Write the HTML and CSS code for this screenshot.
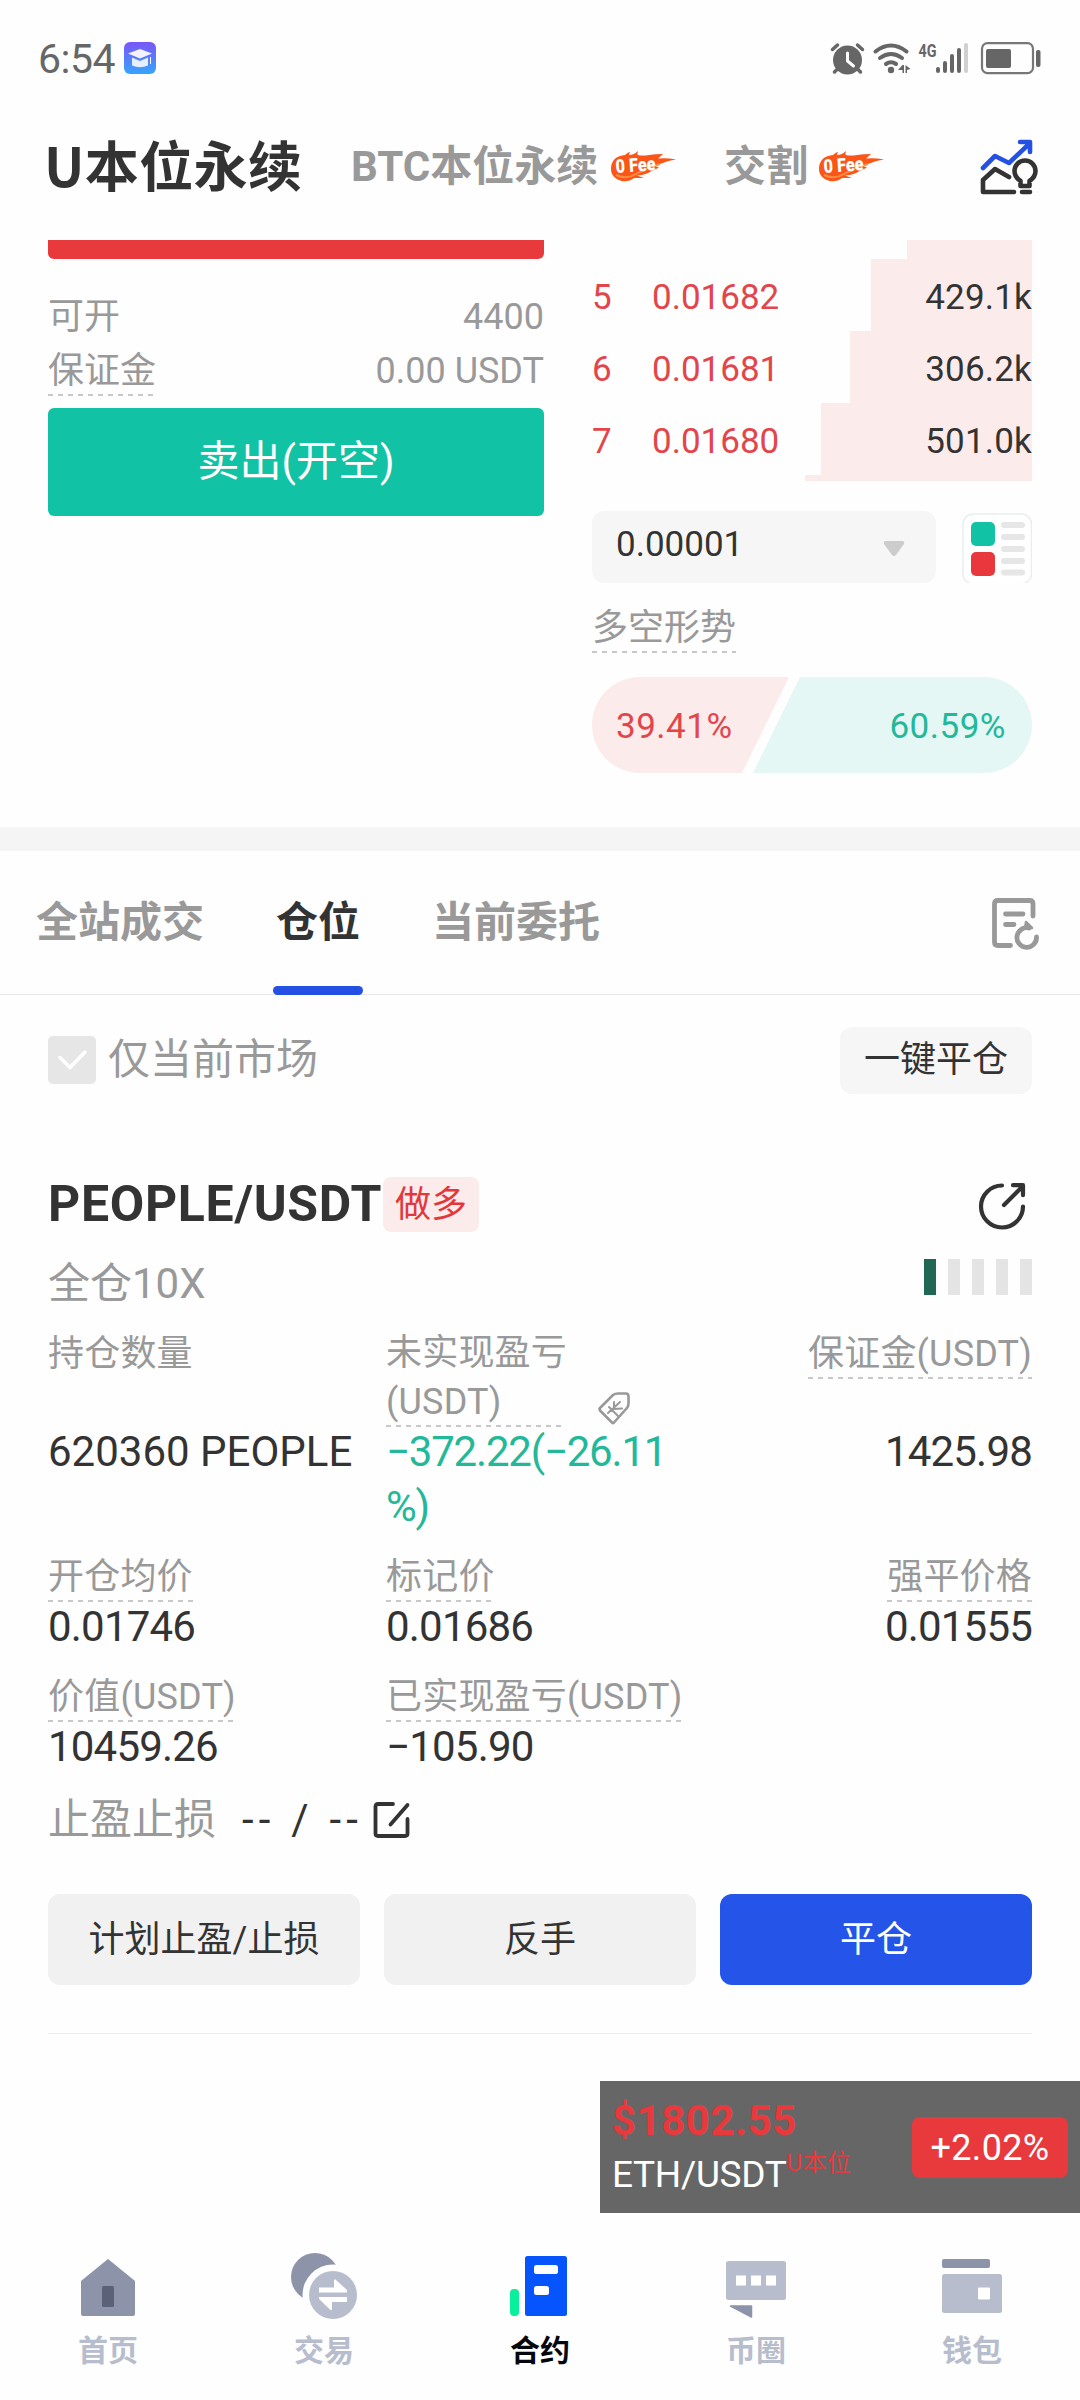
FILE: index.html
```html
<!DOCTYPE html>
<html lang="zh-CN">
<head>
<meta charset="utf-8">
<title>U本位永续</title>
<link rel="stylesheet" href="styles.css">
</head>
<body>
<div class="screen">
  <div class="status">
    <span class="clock">6:54</span>
    <svg class="app-badge" width="32" height="32" viewBox="0 0 32 32">
      <defs><linearGradient id="bg" x1="0" y1="0" x2="0" y2="1"><stop offset="0" stop-color="#7a55f7"/><stop offset="1" stop-color="#35a5fe"/></linearGradient></defs>
      <rect width="32" height="32" rx="6" fill="url(#bg)"/>
      <path d="M4 11.500 16 7l12 4.500L16 16.500z" fill="#f4f2ff"/>
      <path d="M8 15.500l8 3.500 8-3.500v8q-8 3.500-16 0z" fill="#e6efff"/>
      <path d="M26.500 15v7" stroke="#fff" stroke-width="1"/>
    </svg>
    <svg class="status-icons" width="212" height="44" viewBox="830 36 212 44" fill="#666">
      <circle cx="847.500" cy="60" r="14.500"/>
      <path d="M832.500 49.500l5-4.500M857.500 45l5 4.500M837 69.500l-2.500 2.500M858 69.500l2.500 2.500" stroke="#666" stroke-width="3.500" stroke-linecap="round"/>
      <path d="M847.500 53v8l6 5" fill="none" stroke="#fff" stroke-width="3" stroke-linecap="round"/>
      <g fill="none" stroke="#666" stroke-width="4" stroke-linecap="round">
        <path d="M875.500 51.500q15.500-12 31 0M880 58q11-8 22 0M886 64q5-3.500 10 0"/>
      </g>
      <circle cx="891" cy="70" r="3.200"/>
      <path d="M904 65v8h-1.500v-3H898l4.500-5zM905.500 65l5 4-3.500 1v3h-1.500z"/>
      <text x="918.500" y="57" class="net" textLength="18" lengthAdjust="spacingAndGlyphs">4G</text>
      <rect x="936" y="67" width="4" height="6" rx="2"/><rect x="943" y="61" width="4" height="12" rx="2"/>
      <rect x="950" y="54" width="4" height="19" rx="2"/><rect x="957" y="48" width="4" height="25" rx="2"/>
      <rect x="964" y="43" width="4" height="30" rx="2" fill="#d0d0d0"/>
      <rect x="982" y="43.200" width="51" height="30" rx="5.500" fill="none" stroke="#777" stroke-width="2.200"/>
      <rect x="986" y="49" width="25" height="19" rx="2"/><rect x="1036" y="50" width="4.500" height="17" rx="2"/>
    </svg>
  </div>

  <div class="header">
    <span class="h-active">U本位永续</span>
    <span class="h-tab h-btc">BTC本位永续</span>
    <svg class="fee" width="66" height="32" viewBox="0 0 66 32"><use href="#flame"/></svg>
    <span class="h-tab h-del">交割</span>
    <svg class="fee" width="66" height="32" viewBox="0 0 66 32">
      <g id="flame">
        <path d="M0 18C0 9 6 4.500 14 4q3-3 5-3-1 2-1 3 5 0 9-4-1 3 0 4 4 1 11 0 6-1 14-1l-5 4.500q8-1 18 1-7 1-12 3-5 1.500-8 4l3 1q-6 3-12 6-5 2-10 2l7 2.500q-6 0-10 0-5 4-12 3C4 28 0 24 0 18z" fill="#fb5518"/>
        <path d="M5 24q10 5 20-1t24-10" fill="none" stroke="#ff8f45" stroke-width="2"/>
        <text x="5" y="22" class="fee-text" textLength="40" lengthAdjust="spacingAndGlyphs" transform="rotate(-4 5 22)">0 Fee</text>
      </g>
    </svg>
    <svg class="insight" width="60" height="58" viewBox="980 138 60 58" fill="none" stroke-width="4.600" stroke-linecap="round" stroke-linejoin="round">
      <path d="M983 168l12-12 14 7 20-19M1020 142h10v10" stroke="#2450e4"/>
      <path d="M1009 177l-14-8-12 11v12h31M1022 192h8M1020.500 186v-5q-6-4-6-10a10.500 10.500 0 0 1 21 0q0 6-6 10v5z" stroke="#333"/>
    </svg>
  </div>

  <div class="trade">
    <div class="order">
      <div class="buy-end"></div>
      <div class="kv first"><span>可开</span><span>4400</span></div>
      <div class="kv"><span class="dash">保证金</span><span>0.00 USDT</span></div>
      <div class="sell">卖出(开空)</div>
    </div>
    <div class="book">
      <div class="depth top"><i style="width:125px"></i></div>
      <div class="depth"><i style="width:161px"></i><b>5</b><span>0.01682</span><em>429.1k</em></div>
      <div class="depth"><i style="width:182px"></i><b>6</b><span>0.01681</span><em>306.2k</em></div>
      <div class="depth"><i style="width:211px"></i><b>7</b><span>0.01680</span><em>501.0k</em></div>
      <div class="depth end"><i style="width:227px"></i></div>
      <div class="precision">
        <div class="select"><span>0.00001</span>
          <svg width="22" height="17" viewBox="0 0 22 17"><path d="M2 1h18q2 1 1 3l-8 11q-2 2-4 0L1 4q-1-2 1-3z" fill="#ccc"/></svg>
        </div>
        <svg width="70" height="72" viewBox="0 0 70 72">
          <rect x="1" y="3" width="68.500" height="70" rx="10" fill="#fff" stroke="#e8eeee" stroke-width="1.500"/>
          <rect x="9" y="11" width="24" height="24" rx="5" fill="#12c2a4"/><rect x="9" y="41" width="24" height="24" rx="5" fill="#e8383d"/>
          <path d="M42 14h18M42 26h18M42 38h18M42 50h18M42 61.500h18" stroke="#e6e6e6" stroke-width="6" stroke-linecap="round"/>
        </svg>
      </div>
      <div class="mood"><span class="dash">多空形势</span></div>
      <div class="gauge">
        <svg width="440" height="96" viewBox="0 0 440 96"><path d="M48 0H197L150 96H48A48 48 0 0 1 48 0z" fill="#fcebeb"/><path d="M208 0H392a48 48 0 0 1 0 96H161z" fill="#e5f7f4"/></svg>
        <span class="red">39.41%</span><span class="green">60.59%</span>
      </div>
    </div>
  </div>

  <div class="band"></div>
  <div class="tabs">
    <span>全站成交</span><span class="on">仓位</span><span>当前委托</span>
    <svg width="50" height="54" viewBox="991 896 50 54" fill="none" stroke="#999" stroke-width="4.800" stroke-linecap="round" stroke-linejoin="round">
      <path d="M1033 916v-12q0-3.500-3.500-3.500h-31.500q-3.500 0-3.500 3.500v38q0 3.500 3.500 3.500h12.500M1005.500 914h17.500M1005.500 924.500h8.500"/>
      <path d="M1029 928a9.800 9.800 0 1 0 7.500 9"/>
      <path d="M1026 922l6 6-7 .500z" fill="#999" stroke-width="2.500"/>
    </svg>
  </div>

  <div class="filter">
    <svg width="48" height="48" viewBox="0 0 48 48"><rect width="48" height="48" rx="5" fill="#e6e6e6"/><path d="M12 21.500l10 10L37 16" fill="none" stroke="#fff" stroke-width="3.500" stroke-linecap="round"/></svg>
    <span>仅当前市场</span>
    <div class="close-all">一键平仓</div>
  </div>

  <div class="position">
    <div class="pair">
      <span class="symbol">PEOPLE/USDT</span><span class="side">做多</span>
      <svg width="48" height="48" viewBox="978 1182 48 48" fill="none" stroke="#333" stroke-width="4.200" stroke-linecap="round" stroke-linejoin="round"><path d="M1002 1185.500a21 21 0 1 0 21 21M1004 1205l19-19M1013 1185.200h10v10"/></svg>
    </div>
    <div class="mode"><span>全仓10X</span>
      <div class="bars"><i class="lit"></i><i></i><i></i><i></i><i></i></div>
    </div>
    <div class="grid labels">
      <div>持仓数量</div>
      <div class="pnl"><span class="dash">未实现盈亏<br>(USDT)</span>
        <svg width="34" height="34" viewBox="0 0 34 34" fill="none" stroke="#999" stroke-width="2.600" stroke-linecap="round" stroke-linejoin="round"><path d="M3 17L16 4q2-1.500 5-1.500h8q2.500 0 2.500 3v7q0 3-2 5L17 31.500q-1 1-2 0L3 19.500q-1-1.500 0-2.500z"/><path d="M11 22l12-11M12 16l9 9M17 11l0 7 8-.500" stroke-width="2"/></svg>
      </div>
      <div class="r"><span class="dash">保证金(USDT)</span></div>
    </div>
    <div class="grid vals first-vals"><div class="qty">620360 PEOPLE</div><div class="green">−372.22(−26.11<br>%)</div><div class="r">1425.98</div></div>
    <div class="grid labels one"><div><span class="dash">开仓均价</span></div><div><span class="dash">标记价</span></div><div class="r"><span class="dash">强平价格</span></div></div>
    <div class="grid vals"><div>0.01746</div><div>0.01686</div><div class="r">0.01555</div></div>
    <div class="grid labels one second"><div><span class="dash">价值(USDT)</span></div><div><span class="dash">已实现盈亏(USDT)</span></div></div>
    <div class="grid vals"><div>10459.26</div><div>−105.90</div></div>
    <div class="tpsl"><span>止盈止损</span><b>-- / --</b>
      <svg width="38" height="38" viewBox="0 0 38 38" fill="none" stroke="#333" stroke-width="3.800" stroke-linecap="round" stroke-linejoin="round"><path d="M20 3H5q-2.500 0-2.500 2.500v27q0 2.500 2.500 2.500h27q2.500 0 2.500-2.500V18M17.500 23.500L34.500 4"/></svg>
    </div>
    <div class="actions"><div>计划止盈/止损</div><div>反手</div><div class="primary">平仓</div></div>
  </div>

  <div class="nav">
    <div><svg width="72" height="72" viewBox="0 0 72 72"><path d="M36 9L63 31v33q0 2-2 2H11q-2 0-2-2V31z" fill="#8d93a9"/><rect x="30" y="36" width="12" height="21" rx="1.500" fill="#5b6177"/></svg>首页</div>
    <div><svg width="72" height="72" viewBox="0 0 72 72"><circle cx="27" cy="27" r="24" fill="#8d93a9"/><circle cx="45" cy="45" r="30.500" fill="#fefefe"/><circle cx="45" cy="45" r="24" fill="#b7bdcc"/><path d="M31 42.500v-5h15v-7.500q1-1.500 2 0l11 10v2.500zM59 47v5H44v7.500q-1 1.500-2 0L31 49v-2z" fill="#fff"/></svg>交易</div>
    <div class="on"><svg width="72" height="72" viewBox="0 0 72 72"><rect x="21" y="6" width="42" height="60" rx="2.500" fill="#0554fe"/><rect x="30" y="15" width="24" height="9" rx="2.500" fill="#fff"/><rect x="30" y="36" width="15" height="9" rx="2.500" fill="#fff"/><rect x="6" y="39" width="9" height="27" rx="4" fill="#08f09c"/></svg>合约</div>
    <div><svg width="72" height="72" viewBox="0 0 72 72"><rect x="6" y="11" width="60" height="39" rx="2.500" fill="#b7bdcc"/><path d="M16 25.500h10v10H16zM31 25.500h10v10H31zM46 25.500h10v10H46z" fill="#fff"/><path d="M10.500 56h21v11z" fill="#8d93a9" stroke="#8d93a9" stroke-width="1.500" stroke-linejoin="round"/></svg>币圈</div>
    <div><svg width="72" height="72" viewBox="0 0 72 72"><rect x="6" y="9" width="48" height="9" rx="2" fill="#8d93a9"/><rect x="6" y="24" width="60" height="39" rx="2.500" fill="#b7bdcc"/><rect x="42" y="37.500" width="12" height="12" rx="1" fill="#fff"/></svg>钱包</div>
  </div>

  <div class="ticker">
    <div class="quote"><div class="price">$1802.55</div><div class="name">ETH/USDT<sup>U本位</sup></div></div>
    <div class="change">+2.02%</div>
  </div>
</div>
</body>
</html>
```
FILE: styles.css
```css
* { box-sizing: border-box; }
body { margin: 0; background: #fefefe; }
svg { display: block; flex: none; }
i, em { font-style: normal; }
.screen {
  position: relative; width: 1080px; height: 2400px; overflow: hidden;
  display: flex; flex-direction: column;
  font-family: Roboto, "Noto Sans CJK SC", sans-serif;
  font-size: 36px; line-height: 48px; color: #333; white-space: nowrap;
}
.red { color: #e2454a; }
.green { color: #22b899; }
.r { text-align: right; }

.status { height: 116px; display: flex; align-items: center; padding: 0 38px; }
.clock { width: 86px; font-size: 41px; color: #666; letter-spacing: -0.5px; padding-top: 2px; }
.status-icons { margin-left: auto; }
.net { font-size: 19px; font-weight: 700; }

.header { height: 124px; padding: 0 40px 22px 44px; display: flex; align-items: center; font-weight: 700; }
.h-active { width: 307px; margin-bottom: 6px; font-family: "Noto Sans CJK SC", sans-serif; font-size: 54px; letter-spacing: 0.4px; }
.h-tab { font-size: 42px; color: #999; }
.h-btc { width: 260px; }
.h-del { width: 95px; margin-left: 47px; }
.fee-text { font-size: 19px; font-weight: 900; fill: #fff; }
.insight { margin-left: auto; }

.trade { height: 587px; display: flex; justify-content: space-between; padding: 0 48px; }
.order { width: 496px; }
.buy-end { height: 19px; background: #e8393d; border-radius: 0 0 6px 6px; }
.kv { display: flex; justify-content: space-between; color: #999; height: 62px; line-height: 51px; }
.kv.first { height: 54px; margin-top: 33px; }
.dash {
  display: inline-block; height: 50px; color: #999;
  background: repeating-linear-gradient(90deg, #c8c8c8 0 5px, transparent 5px 10px) left bottom / 100% 2px no-repeat;
}
.sell {
  height: 108px; border-radius: 6px; background: #12c2a4; color: #fff;
  font-size: 42px; line-height: 107px; text-align: center;
}

.book { width: 440px; }
.depth {
  height: 72px; display: grid; grid-template-columns: 60px 1fr auto; align-items: center;
  font-size: 35px; color: #333; line-height: 48px;
}
.depth.top { height: 19px; }
.depth.end { height: 6px; }
.depth > i { grid-row: 1; grid-column: 1 / -1; justify-self: end; align-self: stretch; background: #fcebeb; }
.depth b, .depth span { color: #e2454a; font-weight: 400; grid-row: 1; grid-column: 1; padding-top: 5px; }
.depth span { grid-column: 2; }
.depth em { grid-row: 1; grid-column: 3; padding-top: 5px; letter-spacing: 0.2px; }
.precision { height: 72px; margin-top: 30px; display: flex; justify-content: space-between; }
.select {
  width: 344px; padding: 0 31px 4px 24px; border-radius: 12px; background: #f6f6f6;
  display: flex; align-items: center; justify-content: space-between; font-size: 35px;
}
.select svg { margin-top: 6px; }
.mood { margin-top: 20px; height: 50px; line-height: 51px; }
.gauge { display: grid; height: 96px; margin-top: 24px; align-items: center; font-size: 35px; letter-spacing: 0.5px; }
.gauge > * { grid-area: 1 / 1; }
.gauge span { padding: 3px 26px 0 24px; }
.gauge span.green { justify-self: end; }

.band { height: 24px; background: #f5f5f5; }
.tabs {
  height: 144px; padding: 0 39px 0 36px; display: flex; align-items: center; gap: 72px;
  border-bottom: 1px solid #e8e8e8; font-size: 42px; font-weight: 700; color: #999;
}
.tabs span { height: 144px; line-height: 143px; position: relative; }
.tabs .on { color: #333; }
.tabs .on::after {
  content: ""; position: absolute; left: -3px; right: -3px; bottom: 0; height: 9px;
  border-radius: 4.5px; background: #2450e4;
}
.tabs svg { margin-left: auto; }

.filter {
  height: 68px; margin: 31px 48px 0; display: flex; align-items: center; gap: 12px;
  font-size: 42px; color: #999;
}
.close-all {
  width: 192px; height: 67px; margin-left: auto; border-radius: 12px; background: #f6f6f6;
  color: #333; font-size: 36px; line-height: 66px; text-align: center;
}

.position { margin: 82px 48px 0; height: 858px; border-bottom: 1px solid #ebebeb; }
.pair { display: flex; align-items: center; height: 56px; }
.symbol { font-size: 50px; font-weight: 700; width: 335px; letter-spacing: 0.7px; }
.side {
  width: 96px; height: 55px; border-radius: 8px; background: #fcebeb; color: #e2383d;
  text-align: center; line-height: 56px;
}
.pair svg { margin: 3px 6px 0 auto; }
.mode { display: flex; justify-content: space-between; height: 48px; margin-top: 27px; font-size: 42px; line-height: 49px; color: #999; }
.bars { display: flex; gap: 12px; }
.bars i { width: 12px; height: 36px; background: #e4e4e4; }
.bars .lit { background: #206854; }
.grid { display: grid; grid-template-columns: 338px 322px 1fr; }
.labels { margin-top: 22px; color: #999; height: 98px; line-height: 50px; letter-spacing: 0.2px; }
.labels.one { margin-top: 18px; height: 50px; }
.labels.second { margin-top: 22px; }
.pnl { display: flex; gap: 36px; align-items: flex-end; }
.pnl .dash { width: 175px; height: 98px; line-height: 49px; }
.pnl svg { margin-bottom: 2px; }
.vals { font-size: 42px; letter-spacing: -0.8px; line-height: 49px; height: 48px; }
.vals .qty { letter-spacing: 0; }
.vals.first-vals { line-height: 55px; height: 110px; margin-top: -3px; }
.first-vals .green { letter-spacing: -1.2px; }
.tpsl { display: flex; align-items: center; height: 48px; margin-top: 26px; font-size: 42px; color: #999; }
.tpsl b { margin-left: 26px; width: 131px; font-weight: 400; color: #333; letter-spacing: 5.2px; }
.actions { display: flex; gap: 24px; margin-top: 50px; }
.actions div {
  width: 312px; height: 91px; border-radius: 12px; background: #f1f1f1;
  text-align: center; line-height: 92px;
}
.actions .primary { background: #2454e8; color: #fff; }

.nav {
  margin-top: auto; height: 168px; padding-top: 18px; display: flex;
  font-size: 30px; font-weight: 700; line-height: 42px; color: #b7bdcc;
}
.nav div { width: 216px; display: flex; flex-direction: column; align-items: center; gap: 8px; }
.nav .on { color: #05070f; }

.ticker {
  position: absolute; left: 600px; top: 2081px; width: 480px; height: 132px; background: #666;
  display: flex; justify-content: space-between; align-items: center; padding: 0 12px;
}
.price { font-size: 42px; font-weight: 700; color: #e8393d; line-height: 54px; letter-spacing: 0.5px; }
.name { color: #fff; font-size: 37px; line-height: 53px; letter-spacing: -0.3px; }
.name sup { font-size: 24px; line-height: 0; color: #e8393d; vertical-align: 16px; letter-spacing: 0.5px; }
.change {
  width: 156px; height: 61px; border-radius: 8px; background: #e8393d; color: #fff;
  line-height: 62px; text-align: center; letter-spacing: 0.3px;
}
```
